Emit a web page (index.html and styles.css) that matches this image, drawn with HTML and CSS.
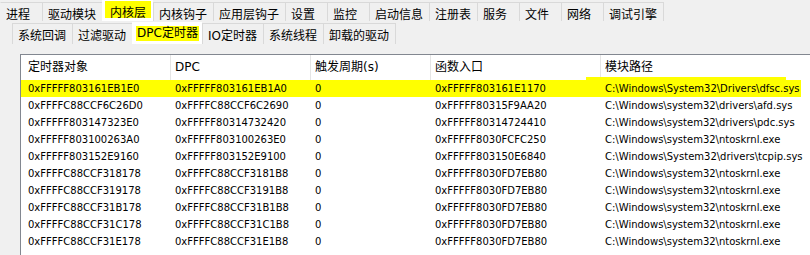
FILE: index.html
```html
<!doctype html>
<html>
<head>
<meta charset="utf-8">
<title>DPC定时器</title>
<link rel="stylesheet" href="styles.css">
</head>
<body>
<div class="tabs top">
	<span class="tab">进程</span>
	<span class="tab">驱动模块</span>
	<span class="tab sel"><b class="mark">内核层</b></span>
	<span class="tab">内核钩子</span>
	<span class="tab">应用层钩子</span>
	<span class="tab">设置</span>
	<span class="tab">监控</span>
	<span class="tab">启动信息</span>
	<span class="tab">注册表</span>
	<span class="tab">服务</span>
	<span class="tab">文件</span>
	<span class="tab">网络</span>
	<span class="tab">调试引擎</span>
</div>
<div class="tabs sub">
	<span class="tab">系统回调</span>
	<span class="tab">过滤驱动</span>
	<span class="tab sel"><b class="mark">DPC定时器</b></span>
	<span class="tab">IO定时器</span>
	<span class="tab">系统线程</span>
	<span class="tab">卸载的驱动</span>
</div>
<div class="list">
	<div class="row head"><span>定时器对象</span><span>DPC</span><span>触发周期(s)</span><span>函数入口</span><span>模块路径</span></div>
	<div class="row hl"><span>0xFFFFF803161EB1E0</span><span>0xFFFFF803161EB1A0</span><span>0</span><span>0xFFFFF803161E1170</span><span>C:\Windows\System32\Drivers\dfsc.sys</span></div>
	<div class="row"><span>0xFFFFC88CCF6C26D0</span><span>0xFFFFC88CCF6C2690</span><span>0</span><span>0xFFFFF80315F9AA20</span><span>C:\Windows\system32\drivers\afd.sys</span></div>
	<div class="row"><span>0xFFFFF803147323E0</span><span>0xFFFFF80314732420</span><span>0</span><span>0xFFFFF80314724410</span><span>C:\Windows\system32\drivers\pdc.sys</span></div>
	<div class="row"><span>0xFFFFF803100263A0</span><span>0xFFFFF803100263E0</span><span>0</span><span>0xFFFFF8030FCFC250</span><span>C:\Windows\system32\ntoskrnl.exe</span></div>
	<div class="row"><span>0xFFFFF803152E9160</span><span>0xFFFFF803152E9100</span><span>0</span><span>0xFFFFF803150E6840</span><span>C:\Windows\System32\drivers\tcpip.sys</span></div>
	<div class="row"><span>0xFFFFC88CCF318178</span><span>0xFFFFC88CCF3181B8</span><span>0</span><span>0xFFFFF8030FD7EB80</span><span>C:\Windows\system32\ntoskrnl.exe</span></div>
	<div class="row"><span>0xFFFFC88CCF319178</span><span>0xFFFFC88CCF3191B8</span><span>0</span><span>0xFFFFF8030FD7EB80</span><span>C:\Windows\system32\ntoskrnl.exe</span></div>
	<div class="row"><span>0xFFFFC88CCF31B178</span><span>0xFFFFC88CCF31B1B8</span><span>0</span><span>0xFFFFF8030FD7EB80</span><span>C:\Windows\system32\ntoskrnl.exe</span></div>
	<div class="row"><span>0xFFFFC88CCF31C178</span><span>0xFFFFC88CCF31C1B8</span><span>0</span><span>0xFFFFF8030FD7EB80</span><span>C:\Windows\system32\ntoskrnl.exe</span></div>
	<div class="row"><span>0xFFFFC88CCF31E178</span><span>0xFFFFC88CCF31E1B8</span><span>0</span><span>0xFFFFF8030FD7EB80</span><span>C:\Windows\system32\ntoskrnl.exe</span></div>
</div>
</body>
</html>
```
FILE: styles.css
```css
*{margin:0;padding:0;box-sizing:border-box;}
html,body{overflow:hidden;}
body{background:#f0f0f0;color:#000;font-family:"DejaVu Sans","Noto Sans CJK SC",sans-serif;font-size:12px;}

/* tab strips */
.tabs{display:flex;}
.tab{display:flex;align-items:center;min-width:42px;padding:0 6px 0 5px;border:1px solid #d9d9d9;border-width:1px 0 0 1px;white-space:nowrap;}
.tab:last-child{border-right-width:1px;}
.mark{font-weight:normal;background:#ff0;}

.top{padding-top:2px;height:21px;}
.top .tab{height:19px;padding-top:2px;}
.top .tab:first-child{border-left-color:transparent;}
.top .sel{margin-top:-2px;height:21px;padding:0 2px;align-items:flex-start;background:#fff;border-color:#fff;}
.top .sel .mark{display:block;height:17px;line-height:24px;padding:0 5px;}

.sub{margin:2px 0 0 12px;height:21px;}
.sub .tab{height:21px;}
.sub .sel{margin-top:-1px;height:22px;padding:0 3px;background:#fff;border-color:#fff;}
.sub .sel .mark{display:block;height:15px;line-height:15px;padding:0 1px;}

/* list view */
.list{margin:10px 0 0 20px;width:790px;height:201px;overflow:hidden;background:#fff;border:1px solid #828790;border-width:1px 0 0 1px;}
.row{display:grid;grid-template-columns:150px 140px 120px 170px 210px;height:17px;line-height:17px;font-size:10px;position:relative;}
.row span{padding-left:4px;white-space:nowrap;overflow:hidden;}
.row span:first-child{padding-left:7px;}
.head{height:25px;line-height:25px;font-size:12px;}
.head span{border-right:1px solid #e5e5e5;}
.head span:last-child{border-right:none;}
.hl{background:linear-gradient(#ff0,#ff0) no-repeat 0 0/780px 100%;}
.hl:before{content:"";position:absolute;left:565px;top:-3px;width:200px;height:3px;background:#ff0;}
```
